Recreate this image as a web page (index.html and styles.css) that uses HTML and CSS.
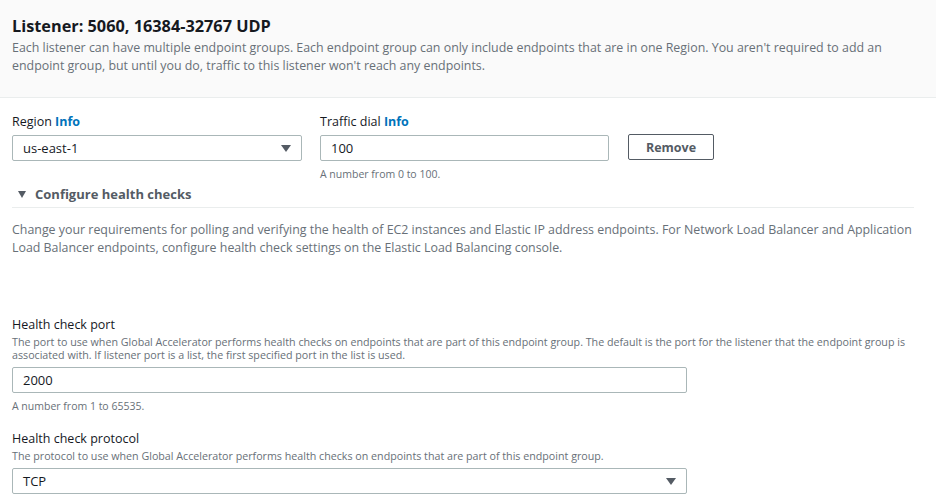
FILE: index.html
```html
<!DOCTYPE html>
<html>
<head>
<meta charset="utf-8">
<link rel="stylesheet" href="styles.css">
</head>
<body>
<div class="header">
  <h2 class="title">Listener: 5060, 16384-32767 UDP</h2>
  <p class="header-desc">Each listener can have multiple endpoint groups. Each endpoint group can only include endpoints that are in one Region. You aren't required to add an endpoint group, but until you do, traffic to this listener won't reach any endpoints.</p>
</div>
<div class="content">
  <div class="row">
    <div class="field region">
      <div class="label">Region <span class="info">Info</span></div>
      <div class="box select"><span>us-east-1</span><span class="caret"></span></div>
    </div>
    <div class="field dial">
      <div class="label">Traffic dial <span class="info">Info</span></div>
      <div class="box"><span>100</span></div>
      <div class="hint">A number from 0 to 100.</div>
    </div>
    <div class="btn-wrap"><button class="btn">Remove</button></div>
  </div>
  <div class="expander"><span class="caret dark"></span><span>Configure health checks</span></div>
  <p class="section-desc">Change your requirements for polling and verifying the health of EC2 instances and Elastic IP address endpoints. For Network Load Balancer and Application Load Balancer endpoints, configure health check settings on the Elastic Load Balancing console.</p>
  <div class="field wide port">
    <div class="flabel">Health check port</div>
    <div class="fdesc">The port to use when Global Accelerator performs health checks on endpoints that are part of this endpoint group. The default is the port for the listener that the endpoint group is associated with. If listener port is a list, the first specified port in the list is used.</div>
    <div class="box"><span>2000</span></div>
    <div class="hint hint-port">A number from 1 to 65535.</div>
  </div>
  <div class="field wide proto">
    <div class="flabel">Health check protocol</div>
    <div class="fdesc">The protocol to use when Global Accelerator performs health checks on endpoints that are part of this endpoint group.</div>
    <div class="box select"><span>TCP</span><span class="caret"></span></div>
  </div>
</div>
</body>
</html>
```
FILE: styles.css
```css
* { box-sizing: border-box; }
body {
  margin: 0;
  background: #fff;
  font-family: "Open Sans", "Noto Sans", sans-serif;
  color: #16191f;
  width: 936px;
  height: 504px;
  overflow: hidden;
}
.header {
  background: #fafafa;
  border-bottom: 1px solid #eaeded;
  padding: 16px 12px 0 12px;
  height: 98px;
}
.title {
  margin: 0;
  font-size: 16.3px;
  font-weight: 700;
  line-height: 20px;
  color: #16191f;
}
.header-desc {
  margin: 3px 0 0 0;
  font-size: 12.4px;
  line-height: 18px;
  color: #687078;
  width: 900px;
}
.content { padding: 16px 12px 0 12px; }
.row { display: flex; align-items: flex-start; }
.label { font-size: 12.5px; line-height: 16px; color: #16191f; margin-bottom: 5px; }
.info { color: #0073bb; font-weight: 700; }
.box {
  border: 1px solid #aab7b8;
  border-radius: 2px;
  height: 26px;
  display: flex;
  align-items: center;
  justify-content: space-between;
  padding: 0 10px;
  font-size: 13px;
  color: #16191f;
  background: #fff;
}
.region { width: 290px; }
.dial { width: 289px; margin-left: 18px; }
.caret {
  width: 0; height: 0;
  border-left: 5px solid transparent;
  border-right: 5px solid transparent;
  border-top: 7px solid #545b64;
}
.hint { font-size: 10.5px; line-height: 14px; color: #687078; margin-top: 6px; }
.hint-port { margin-top: 6px; }
.btn-wrap { padding-top: 20px; margin-left: 19px; }
.btn {
  width: 86px; height: 26px;
  border: 1px solid #545b64;
  border-radius: 2px;
  background: #fff;
  color: #545b64;
  font-family: inherit;
  font-weight: 700;
  font-size: 12.5px;
  padding: 0;
}
.expander {
  display: flex; align-items: center;
  margin-top: 4px;
  padding: 0 0 4px 6px;
  border-bottom: 1px solid #eaeded;
  width: 902px;
  font-size: 13px; font-weight: 700; color: #545b64;
  height: 23px;
  line-height: 18px;
}
.expander .caret { margin-right: 9px; border-left-width: 4.5px; border-right-width: 4.5px; border-top-width: 7px; }
.section-desc {
  margin: 13px 0 0 0;
  font-size: 12.4px;
  line-height: 18px;
  color: #687078;
  width: 912px;
}
.wide { width: 675px; }
.port { margin-top: 60px; }
.flabel { font-size: 12.5px; line-height: 16px; color: #16191f; }
.fdesc { font-size: 10.7px; line-height: 13px; color: #687078; width: 912px; margin-top: 3px; margin-bottom: 5px; }
.proto { margin-top: 18px; }
```
